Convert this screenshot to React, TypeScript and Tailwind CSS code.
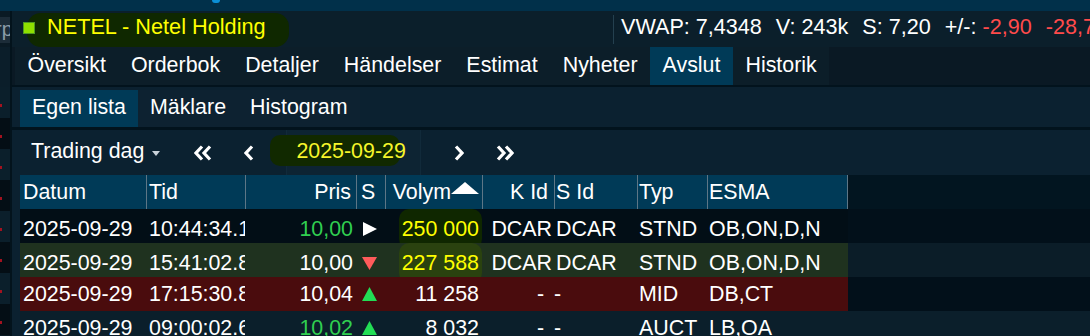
import React from "react";

type Row = {
  date: string;
  time: string;
  price: string;
  priceUp: boolean;
  side: "right" | "down" | "up";
  volume: string;
  marked: boolean;
  kid: string;
  sid: string;
  typ: string;
  esma: string;
  bg: string;
  rest: string;
  mark: string;
};

const rows: Row[] = [
  { date: "2025-09-29", time: "10:44:34.123", price: "10,00", priceUp: true, side: "right", volume: "250 000", marked: true, kid: "DCAR", sid: "DCAR", typ: "STND", esma: "OB,ON,D,N", bg: "bg-[#020e16]", rest: "bg-[#02101a]", mark: "bg-[#0f2700]" },
  { date: "2025-09-29", time: "15:41:02.845", price: "10,00", priceUp: false, side: "down", volume: "227 588", marked: true, kid: "DCAR", sid: "DCAR", typ: "STND", esma: "OB,ON,D,N", bg: "bg-[#1f321f]", rest: "bg-[#0b1d28]", mark: "bg-[#2a420f]" },
  { date: "2025-09-29", time: "17:15:30.812", price: "10,04", priceUp: false, side: "up", volume: "11 258", marked: false, kid: "-", sid: "-", typ: "MID", esma: "DB,CT", bg: "bg-[#4a0c0d]", rest: "bg-[#02101a]", mark: "" },
  { date: "2025-09-29", time: "09:00:02.634", price: "10,02", priceUp: true, side: "up", volume: "8 032", marked: false, kid: "-", sid: "-", typ: "AUCT", esma: "LB,OA", bg: "bg-[#0b1f2b]", rest: "bg-[#0b1f2b]", mark: "" },
];

const tabs = ["Översikt", "Orderbok", "Detaljer", "Händelser", "Estimat", "Nyheter", "Avslut", "Historik"];
const subTabs = ["Egen lista", "Mäklare", "Histogram"];

function Chevron({ dir, double }: { dir: "left" | "right"; double?: boolean }) {
  const w = double ? 18 : 10;
  const one = dir === "left" ? "8,1.5 2,8 8,14.5" : "2,1.5 8,8 2,14.5";
  const two = dir === "left" ? "16,1.5 10,8 16,14.5" : "10,1.5 16,8 10,14.5";
  return (
    <svg width={w} height={16} viewBox={`0 0 ${w} 16`} className="shrink-0">
      <polyline points={one} fill="none" stroke="white" strokeWidth={3.2} />
      {double && <polyline points={two} fill="none" stroke="white" strokeWidth={3.2} />}
    </svg>
  );
}

function SideMark({ side }: { side: Row["side"] }) {
  if (side === "right")
    return (
      <svg width={15} height={14} viewBox="0 0 15 14">
        <polygon points="1,0 15,7 1,14" fill="#ffffff" />
      </svg>
    );
  if (side === "down")
    return (
      <svg width={15} height={14} viewBox="0 0 15 14">
        <polygon points="0,1 15,1 7.5,14" fill="#ff5b5b" />
      </svg>
    );
  return (
    <svg width={15} height={14} viewBox="0 0 15 14">
      <polygon points="0,14 15,14 7.5,0" fill="#22dd55" />
    </svg>
  );
}

export default function App() {
  const cols = "grid grid-cols-[126px_99px_111px_29px_97px_72px_83px_70px_141px_1fr]";

  return (
    <div className="w-[1090px] h-[336px] overflow-hidden bg-[#01304a] font-['Liberation_Sans',Arial,sans-serif] text-[21.4px] text-white leading-normal">
      {/* top strip of the window behind */}
      <div className="h-[11px] relative">
        <div className="absolute left-[212px] top-0 w-[8px] h-[3px] rounded-b-full bg-[#0b8fd6]" />
      </div>

      <div className="flex h-[325px]">
        {/* neighbour panel */}
        <div className="w-[10px] shrink-0 flex flex-col overflow-hidden bg-[#0a1a24]">
          <div className="h-[36px] pt-[6px]">
            <div className="h-[26px] bg-[#1c2c38] text-[#8c9ca8] text-[20px] leading-[24px] -ml-[5px] overflow-hidden whitespace-nowrap">rp</div>
          </div>
          <div className="h-[40px] bg-[#0b1e2a]" />
          {Array.from({ length: 8 }).map((_, i) => (
            <div key={i} className={`h-[31px] shrink-0 pt-[17px] ${i % 2 === 0 ? "bg-[#0b1f2b]" : "bg-[#040e15]"}`}>
              <div className="w-[2px] h-[3px] bg-[#a3121f]" />
            </div>
          ))}
        </div>
        <div className="w-[2px] shrink-0 bg-[#03131c]" />

        {/* main window */}
        <div className="flex-1 flex flex-col min-w-0 bg-[#0b1f2b]">
          {/* title bar */}
          <div className="h-[36px] shrink-0 flex items-center relative">
            <div className="absolute left-[15px] top-[2px] w-[262px] h-[34px] rounded-[14px] bg-[#0f2800]" />
            <div className="relative w-[601px] shrink-0 flex items-center pl-[11px] pb-[3px]">
              <div className="w-[12px] h-[12px] bg-[#8fe000] border border-[#4f9a22] mt-[2px]" />
              <span className="ml-[12px] text-[#ffff00] whitespace-nowrap text-[21.7px]">NETEL - Netel Holding</span>
            </div>
            <div className="flex items-center h-[29px] border-l border-[#24404f] pl-[7px] pb-[3px] gap-[14px] whitespace-nowrap text-[21.6px]">
              <span>VWAP: 7,4348</span>
              <span>V: 243k</span>
              <span>S: 7,20</span>
              <span>
                +/-: <span className="text-[#ff4b4b]">-2,90</span>
              </span>
              <span className="text-[#ff4b4b]">-28,75%</span>
            </div>
          </div>

          {/* main tabs */}
          <div className="h-[38px] shrink-0 flex bg-[#0a1924] pl-[3px]">
            <div className="flex bg-[#0c1e29]">
              {tabs.map((t) => (
                <div
                  key={t}
                  className={`px-[12.5px] flex items-center pb-[2px] whitespace-nowrap ${t === "Avslut" ? "bg-[#003a57]" : ""}`}
                >
                  {t}
                </div>
              ))}
            </div>
          </div>
          <div className="h-[2px] shrink-0 bg-[#02131d]" />

          {/* sub tabs */}
          <div className="h-[40px] shrink-0 bg-[#0b2130] pl-[8px] pt-[3px] flex">
            <div className="flex bg-[#0d2231]">
              {subTabs.map((t) => (
                <div
                  key={t}
                  className={`px-[12px] flex items-center pb-[2px] whitespace-nowrap ${t === "Egen lista" ? "bg-[#003a57]" : ""}`}
                >
                  {t}
                </div>
              ))}
            </div>
          </div>
          <div className="h-[3px] shrink-0 bg-[#02131d]" />

          {/* toolbar */}
          <div className="h-[45px] shrink-0 bg-[#0b2130] pl-[19px] flex items-center">
            <span className="whitespace-nowrap pb-[2px]">Trading dag</span>
            <svg width={8} height={5} viewBox="0 0 8 5" className="ml-[8px] mt-[2px]">
              <polygon points="0,0 8,0 4,5" fill="#c9d2da" />
            </svg>
            <div className="ml-[34px]">
              <Chevron dir="left" double />
            </div>
            <div className="ml-[32px]">
              <Chevron dir="left" />
            </div>
            <div className="ml-[32px] w-[135px] h-full relative border-x border-[#112a3a] bg-[#0d2433] flex items-center pl-[9px]">
              <div className="absolute -left-[17px] top-[5px] w-[130px] h-[31px] rounded-[10px] bg-[#112900]" />
              <span className="relative text-[#f6f62a] pb-[2px]">2025-09-29</span>
            </div>
            <div className="ml-[33px]">
              <Chevron dir="right" />
            </div>
            <div className="ml-[32px]">
              <Chevron dir="right" double />
            </div>
          </div>

          {/* table */}
          <div className="pl-[8px] bg-[#0b2130]">
            <div className={`${cols} h-[34px]`}>
              <div className="bg-[#003a57] pl-[3px] flex items-center">Datum</div>
              <div className="bg-[#003a57] border-l border-[#5d7686] pl-[2px] flex items-center">Tid</div>
              <div className="bg-[#003a57] border-l border-[#5d7686] pr-[5px] flex items-center justify-end">Pris</div>
              <div className="bg-[#003a57] border-l border-[#5d7686] pl-[4px] flex items-center">S</div>
              <div className="bg-[#003a57] border-l border-[#5d7686] pr-[3px] flex items-center justify-end">
                Volym
                <svg width={28} height={12} viewBox="0 0 28 12" className="mb-[8px] shrink-0">
                  <polygon points="0,12 28,12 14,0" fill="#ffffff" />
                </svg>
              </div>
              <div className="bg-[#003a57] border-l border-[#5d7686] pr-[6px] flex items-center justify-end">K Id</div>
              <div className="bg-[#003a57] border-l border-[#5d7686] pl-[1px] flex items-center">S Id</div>
              <div className="bg-[#003a57] border-l border-[#5d7686] pl-[1px] flex items-center">Typ</div>
              <div className="bg-[#003a57] border-x border-[#5d7686] pl-[1px] flex items-center">ESMA</div>
              <div className="bg-[#021520]" />
            </div>

            {rows.map((r, i) => (
              <div key={i} className={`${cols} h-[34px]`}>
                <div className={`${r.bg} pl-[3px] flex items-center whitespace-nowrap`}>{r.date}</div>
                <div className={`${r.bg} pl-[3px] flex items-center whitespace-nowrap overflow-hidden`}>{r.time}</div>
                <div className={`${r.bg} pr-[3px] flex items-center justify-end ${r.priceUp ? "text-[#30cf50]" : ""}`}>{r.price}</div>
                <div className={`${r.bg} pl-[6px] flex items-center`}>
                  <SideMark side={r.side} />
                </div>
                <div className={`${r.bg} pr-[3px] flex items-center justify-end whitespace-nowrap`}>
                  {r.marked ? (
                    <span className={`${r.mark} text-[#ffff00] rounded-[10px] px-[3px] -mr-[3px] py-[4px]`}>{r.volume}</span>
                  ) : (
                    r.volume
                  )}
                </div>
                <div className={`${r.bg} flex items-center justify-end whitespace-nowrap ${r.kid === "-" ? "pr-[10px]" : "pr-[2px]"}`}>{r.kid}</div>
                <div className={`${r.bg} flex items-center whitespace-nowrap ${r.sid === "-" ? "pl-[0px]" : "pl-[2px]"}`}>{r.sid}</div>
                <div className={`${r.bg} pl-[2px] flex items-center`}>{r.typ}</div>
                <div className={`${r.bg} pl-[2px] flex items-center whitespace-nowrap`}>{r.esma}</div>
                <div className={r.rest} />
              </div>
            ))}
          </div>
        </div>
      </div>
    </div>
  );
}
